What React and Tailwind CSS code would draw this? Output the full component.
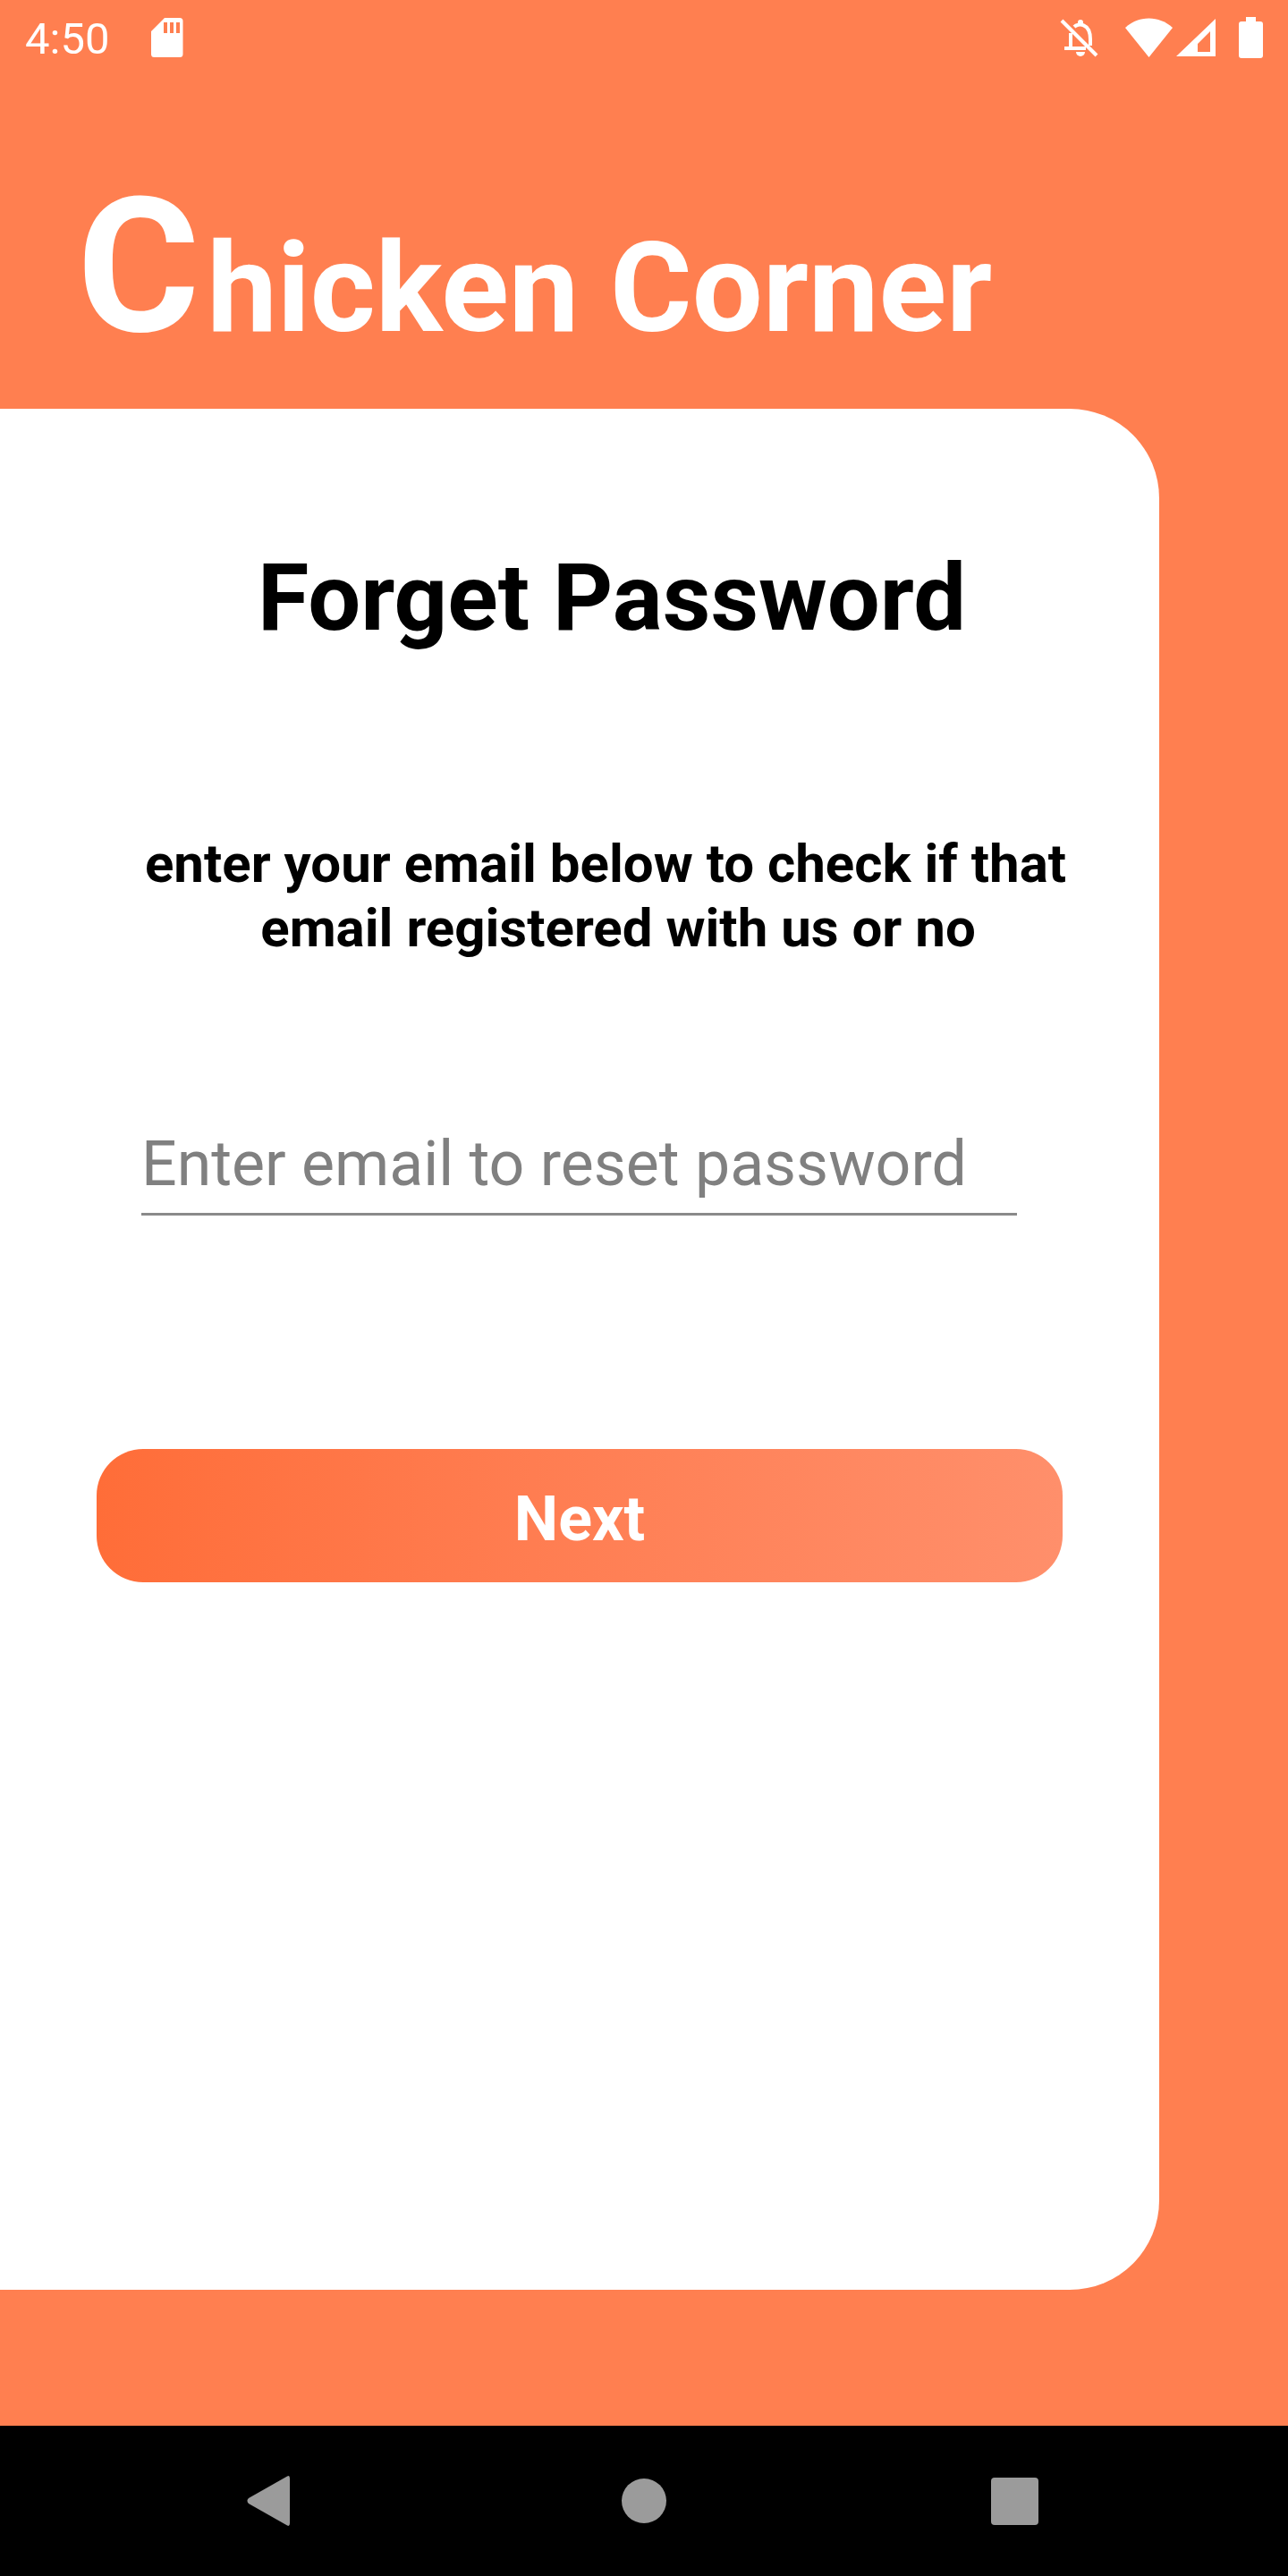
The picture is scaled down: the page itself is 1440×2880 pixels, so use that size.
import React from "react";

const roboto = { fontFamily: "Roboto, sans-serif" };

// Iconos de la barra de estado
const SdCardIcon = () => (
  <svg width="36" height="44" viewBox="0 0 36 44" fill="white">
    <path d="M15 0H32a3.500 3.500 0 0 1 3.500 3.500V40.500a3.500 3.500 0 0 1-3.500 3.500H3.500A3.500 3.500 0 0 1 0 40.500V15Z" />
    <rect x="14" y="5" width="4" height="12" fill="#FF7F50" />
    <rect x="21" y="5" width="4" height="12" fill="#FF7F50" />
    <rect x="28" y="5" width="4" height="12" fill="#FF7F50" />
  </svg>
);

const BellOffIcon = () => (
  <svg width="44" height="44" viewBox="0 0 44 44" fill="none" stroke="white" strokeWidth="4">
    <path d="M2 3L41 42" />
    <path d="M5 34H29M12 17V34M16 10C20 6 34 5 34 24V31" />
    <circle cx="23" cy="5" r="3" fill="white" stroke="none" />
    <path d="M18 38a5 5 0 0 0 10 0Z" fill="white" stroke="none" />
  </svg>
);

const StatusIcons = () => (
  <div className="flex items-center">
    <BellOffIcon />
    <svg className="ml-[29px]" width="53" height="44" viewBox="0 0 53 44" fill="white">
      <path d="M0 11C15-3 38-3 53 11L26.500 44Z" />
    </svg>
    <svg className="ml-[4px]" width="45" height="44" viewBox="0 0 45 44" fill="white">
      <path fillRule="evenodd" d="M44 1V43H0ZM38 15L24 29V38H38Z" />
    </svg>
    <svg className="ml-[25px]" width="27" height="46" viewBox="0 0 27 46" fill="white">
      <path d="M8 0H19V5H24a3 3 0 0 1 3 3V43a3 3 0 0 1-3 3H3a3 3 0 0 1-3-3V8a3 3 0 0 1 3-3H8Z" />
    </svg>
  </div>
);

const App = () => {
  return (
    <div className="w-[1440px] h-[2880px] flex flex-col bg-[#FF7F50]" style={roboto}>
      <div className="h-[457px] shrink-0 flex flex-col">
        {/* Barra de estado */}
        <div className="h-[84px] shrink-0 flex items-center justify-between pl-[28px] pr-[28px]">
          <div className="flex items-center">
            <span className="pt-[2px] text-[49px] leading-none text-white">4:50</span>
            <div className="ml-[47px]">
              <SdCardIcon />
            </div>
          </div>
          <StatusIcons />
        </div>
        <h1 className="mt-[119px] pl-[86px] flex items-baseline text-white font-bold leading-none">
          <span className="text-[210px] leading-[190px]">C</span>
          <span className="ml-[8px] text-[140px]">hicken Corner</span>
        </h1>
      </div>

      {/* Tarjeta */}
      <div className="w-[1296px] h-[2103px] shrink-0 bg-white rounded-r-[100px] flex flex-col">
        <h2 className="mt-[150px] ml-[288px] text-[104.5px] leading-[123px] font-bold text-black">Forget Password</h2>
        <p className="mt-[200px] w-[1354px] text-center text-[60px] leading-[72px] font-bold text-black">
          <span className="block">enter your email below to check if that</span>
          <span className="block pl-[28px]">email registered with us or no</span>
        </p>
        <div className="mt-[200px] ml-[158px] w-[979px] h-[85px] border-b-[3px] border-[#8a8a8a] flex items-end pb-[14px]">
          <input
            readOnly
            placeholder="Enter email to reset password"
            className="w-full bg-transparent outline-none text-[69.8px] leading-[82px] placeholder:text-[#808080]"
          />
        </div>
        <button className="mt-[261px] ml-[108px] w-[1080px] h-[149px] pt-[8px] rounded-[52px] bg-gradient-to-r from-[#FF6D38] to-[#FF8F6B] text-white text-[70px] font-bold">
          Next
        </button>
      </div>

      <div className="h-[152px] shrink-0" />

      {/* Barra de navegación */}
      <div className="h-[168px] shrink-0 bg-black flex items-center">
        <svg className="ml-[276px]" width="48" height="56" viewBox="0 0 50 56" preserveAspectRatio="none" fill="#9b9b9b">
          <path d="M47 0.500Q50-1 50 3V53Q50 57 47 55.500L2 31Q-1 28 2 25Z" />
        </svg>
        <div className="ml-[371px] w-[50px] h-[50px] rounded-full bg-[#9b9b9b]" />
        <div className="ml-[363px] w-[53px] h-[53px] rounded-[4px] bg-[#9b9b9b]" />
      </div>
    </div>
  );
};

export default App;
